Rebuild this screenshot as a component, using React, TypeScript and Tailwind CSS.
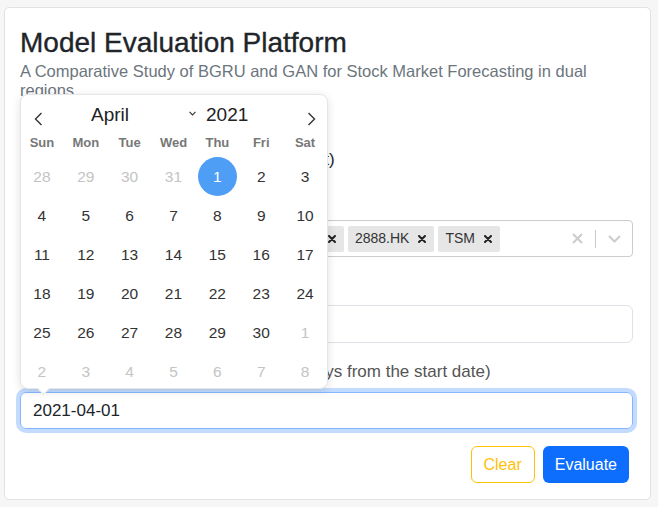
import React from "react";

const font = { fontFamily: '"Liberation Sans", Arial, sans-serif' };

const weeks = [
  [28, 29, 30, 31, 1, 2, 3],
  [4, 5, 6, 7, 8, 9, 10],
  [11, 12, 13, 14, 15, 16, 17],
  [18, 19, 20, 21, 22, 23, 24],
  [25, 26, 27, 28, 29, 30, 1],
  [2, 3, 4, 5, 6, 7, 8],
];

const dayNames = ["Sun", "Mon", "Tue", "Wed", "Thu", "Fri", "Sat"];

const tags = ["AAPL", "AMD", "0700.HK", "1299.HK", "2888.HK", "TSM"];

function SmallX({ className }: { className?: string }) {
  return (
    <svg width="8" height="8" viewBox="0 0 8 8" className={className}>
      <path d="M1 1L7 7M7 1L1 7" stroke="currentColor" strokeWidth="2" strokeLinecap="round" />
    </svg>
  );
}

function Calendar() {
  return (
    <div className="absolute left-[15px] top-[86px] w-[308px] h-[295px] bg-white rounded-[8px] border border-[#e6e6e6] shadow-[0_2px_10px_rgba(0,0,0,0.12)] z-10">
      {/* header */}
      <div className="flex items-center h-[38px] pt-[2px]">
        <div className="w-[34px] flex justify-center pt-[7px]">
          <svg width="9" height="14" viewBox="0 0 9 14">
            <path d="M7.5 1L1.5 7L7.5 13" fill="none" stroke="#333" strokeWidth="1.4" />
          </svg>
        </div>
        <div className="ml-[36px] w-[98px] text-[19px] text-[#222]">April</div>
        <svg width="7" height="5" viewBox="0 0 7 5" className="-mt-[4px]">
          <path d="M0.5 0.8L3.5 4L6.5 0.8" fill="none" stroke="#333" strokeWidth="1.1" />
        </svg>
        <div className="ml-[10px] text-[19px] text-[#222]">2021</div>
        <div className="flex-1" />
        <div className="w-[34px] flex justify-center pt-[7px] mr-[-1px]">
          <svg width="9" height="14" viewBox="0 0 9 14">
            <path d="M1.5 1L7.5 7L1.5 13" fill="none" stroke="#333" strokeWidth="1.4" />
          </svg>
        </div>
      </div>
      {/* day names */}
      <div className="grid grid-cols-7 h-[16px] -ml-px">
        {dayNames.map((d) => (
          <div key={d} className="flex items-center justify-center text-[13px] font-bold text-[#777]">
            {d}
          </div>
        ))}
      </div>
      {/* days */}
      <div className="mt-[8px] -ml-px">
        {weeks.map((w, wi) => (
          <div key={wi} className="grid grid-cols-7 h-[39px]">
            {w.map((d, di) => {
              const outside = (wi === 0 && d > 20) || (wi >= 4 && d < 10);
              const selected = wi === 0 && d === 1;
              return (
                <div key={di} className="flex items-center justify-center">
                  {selected ? (
                    <span className="w-[39px] h-[39px] rounded-full bg-[#4f9ef5] text-white text-[15.5px] flex items-center justify-center">
                      {d}
                    </span>
                  ) : (
                    <span className={`text-[15.5px] ${outside ? "text-[#c4c4c4]" : "text-[#333]"}`}>{d}</span>
                  )}
                </div>
              );
            })}
          </div>
        ))}
      </div>
      {/* arrow */}
      <div className="absolute left-[18px] -bottom-[5px] w-[9px] h-[9px] bg-white rotate-45 border-r border-b border-[#e6e6e6]" />
    </div>
  );
}

export default function App() {
  return (
    <div className="min-h-[507px] bg-[#f6f6f6] pt-[7px] pl-[4px]" style={font}>
      <div className="relative w-[647px] bg-white border border-[#e2e2e2] rounded-[5px] pt-[18px] pl-[15px] pr-[17px] pb-[16px]">
        <h2 className="text-[28px] leading-[34px] font-medium text-[#212529] [-webkit-text-stroke:0.35px_#212529]">
          Model Evaluation Platform
        </h2>
        <p className="mt-[2px] text-[16.5px] leading-[19px] text-[#6c757d]">
          A Comparative Study of BGRU and GAN for Stock Market Forecasting in dual regions
        </p>

        <div className="mt-[48px] text-[17px] leading-[24px] text-[#212529]">
          Stock Symbols (US &amp; Hong Kong market)
        </div>
        <div className="mt-[16px] text-[17px] leading-[24px] text-[#212529]">Select up to 6 stocks</div>
        <div className="mt-[8px] h-[37px] flex items-center border border-[#cccccc] rounded-[4px] bg-white">
          <div className="flex-1 flex items-center gap-[4px] pl-[7px]">
            {tags.map((t) => (
              <div key={t} className="h-[26px] flex items-center bg-[#e6e6e6] rounded-[2px] text-[14px] text-[#333]">
                <span className="pl-[7px] pr-[1px]">{t}</span>
                <span className="w-[24px] h-full flex items-center justify-center text-[#222]">
                  <SmallX />
                </span>
              </div>
            ))}
          </div>
          <div className="w-[36px] h-full flex items-center justify-center text-[#cccccc]">
            <svg width="11" height="11" viewBox="0 0 11 11">
              <path d="M1 1L10 10M10 1L1 10" stroke="currentColor" strokeWidth="2" />
            </svg>
          </div>
          <div className="w-px h-[18px] bg-[#cccccc]" />
          <div className="w-[36px] h-full flex items-center justify-center text-[#cccccc]">
            <svg width="13" height="8" viewBox="0 0 13 8">
              <path d="M1 1L6.5 6.5L12 1" fill="none" stroke="currentColor" strokeWidth="2" />
            </svg>
          </div>
        </div>

        <div className="mt-[16px] text-[17px] leading-[24px] text-[#212529]">Start Date</div>
        <div className="mt-[8px] h-[38px] flex items-center px-[12px] border border-[#dee2e6] rounded-[6px] text-[17px] text-[#212529]">
          2021-01-01
        </div>

        <div className="mt-[17px] text-[17px] leading-[24px] text-[#555]">
          End Date (must be at least 30 trading days from the start date)
        </div>
        <div className="mt-[8px] h-[37px] flex items-center px-[12px] border border-[#86b7fe] rounded-[6px] shadow-[0_0_0_4px_rgba(13,110,253,0.25)] text-[17px] text-[#212529]">
          2021-04-01
        </div>

        <div className="mt-[17px] flex justify-end gap-[8px] mr-[4px]">
          <button className="h-[37px] px-[12px] border border-[#ffc107] rounded-[6px] text-[16px] text-[#ffc107] bg-white">
            Clear
          </button>
          <button className="h-[37px] px-[12px] rounded-[6px] text-[16px] text-white bg-[#0d6efd]">Evaluate</button>
        </div>

        <Calendar />
      </div>
    </div>
  );
}
